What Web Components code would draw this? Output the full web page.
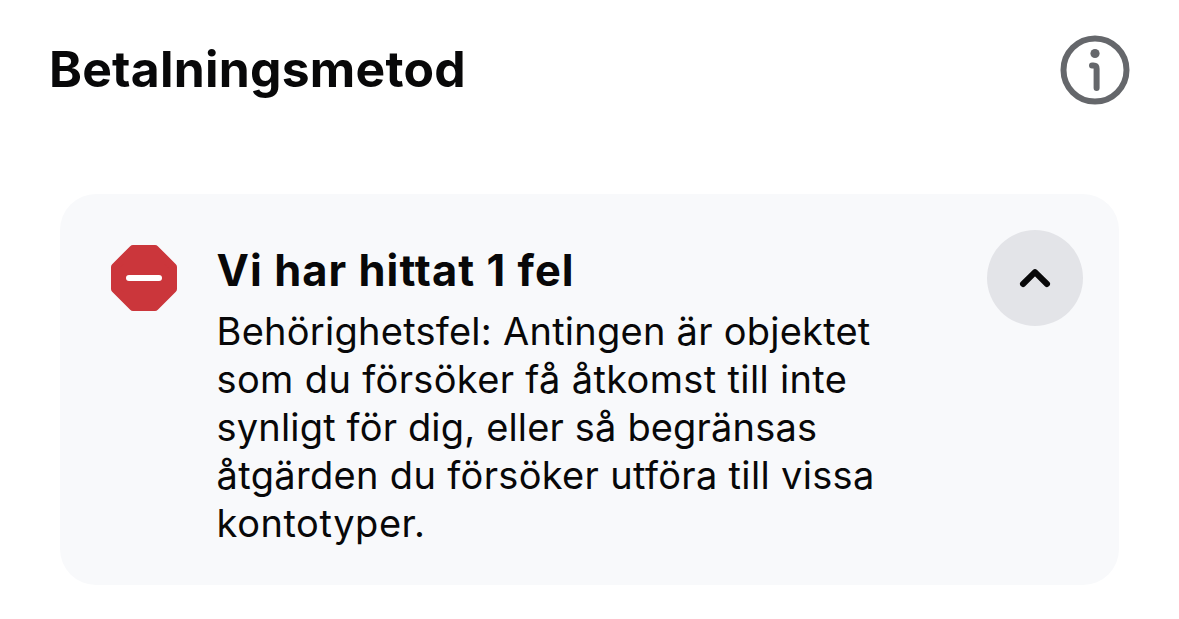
<!DOCTYPE html>
<html lang="sv">
<head>
<meta charset="utf-8">
<title>Betalningsmetod</title>
<style>
    body {
        margin: 0;
        background: #fff;
        color: #080809;
        font-family: Inter, "Liberation Sans", sans-serif;
    }
</style>
</head>
<body>
<payment-section heading="Betalningsmetod">
    <error-notice>
        <span slot="title">Vi har hittat 1 fel</span>
        <span slot="line" style="letter-spacing: 0.25px">Behörighetsfel: Antingen är objektet</span>
        <span slot="line" style="letter-spacing: 0.34px">som du försöker få åtkomst till inte</span>
        <span slot="line" style="letter-spacing: 0.16px">synligt för dig, eller så begränsas</span>
        <span slot="line" style="letter-spacing: 0.33px">åtgärden du försöker utföra till vissa</span>
        <span slot="line" style="letter-spacing: 0.55px">kontotyper.</span>
    </error-notice>
</payment-section>
<script>
class InfoIcon extends HTMLElement {
    constructor() {
        super();
        this.attachShadow({ mode: "open" });
        this.shadowRoot.innerHTML = `
        <style>
            :host { display: block; width: 70px; height: 70px; }
            svg { display: block; }
        </style>
        <svg width="70" height="70" viewBox="0 0 70 70" fill="none">
            <circle cx="35" cy="35" r="31.5" stroke="#65676b" stroke-width="6"/>
            <circle cx="35" cy="18.5" r="4.6" fill="#65676b"/>
            <path d="M32 30.5H33.5Q36.6 30.5 36.6 33.7V53" stroke="#65676b" stroke-width="6" stroke-linecap="round" stroke-linejoin="round"/>
        </svg>
        `;
    }
}

class StopIcon extends HTMLElement {
    constructor() {
        super();
        this.attachShadow({ mode: "open" });
        this.shadowRoot.innerHTML = `
        <style>
            :host { display: block; width: 66px; height: 66px; }
            svg { display: block; }
        </style>
        <svg width="66" height="66" viewBox="0 0 66 66">
            <path d="M22 4H44L62 22V44L44 62H22L4 44V22Z" fill="#cb363b" stroke="#cb363b" stroke-width="8" stroke-linejoin="round"/>
            <path d="M18 33H48" stroke="#fff" stroke-width="6" stroke-linecap="round"/>
        </svg>
        `;
    }
}

class CollapseButton extends HTMLElement {
    constructor() {
        super();
        this.attachShadow({ mode: "open" });
        this.shadowRoot.innerHTML = `
        <style>
            :host { display: block; width: 96px; height: 96px; }
            button {
                display: flex;
                align-items: center;
                justify-content: center;
                width: 96px;
                height: 96px;
                padding: 0;
                border: none;
                border-radius: 50%;
                background: #e3e4e8;
                cursor: pointer;
            }
        </style>
        <button type="button" aria-label="Dölj">
            <svg width="36" height="24" viewBox="0 0 36 24" fill="none">
                <path d="M6 18L18 6.2L30 18" stroke="#080809" stroke-width="6" stroke-linecap="round" stroke-linejoin="round"/>
            </svg>
        </button>
        `;
    }
}

class ErrorNotice extends HTMLElement {
    constructor() {
        super();
        this.attachShadow({ mode: "open" });
        this.shadowRoot.innerHTML = `
        <style>
            :host {
                display: flex;
                box-sizing: border-box;
                width: 1059px;
                height: 391px;
                padding: 36px 36px 0 51px;
                border-radius: 36px;
                background: #f8f9fb;
            }
            stop-icon { margin-top: 15px; }
            .text { flex: 1; margin-left: 39.6px; padding-top: 15px; }
            .title {
                font-size: 43.4px;
                font-weight: 700;
                line-height: 50px;
                letter-spacing: 1.05px;
                white-space: nowrap;
            }
            .lines { margin-top: 12px; }
            ::slotted([slot="line"]) {
                display: block;
                font-size: 38px;
                line-height: 48px;
                white-space: nowrap;
            }
        </style>
        <stop-icon></stop-icon>
        <div class="text">
            <div class="title"><slot name="title"></slot></div>
            <div class="lines"><slot name="line"></slot></div>
        </div>
        <collapse-button></collapse-button>
        `;
    }
}

class PaymentSection extends HTMLElement {
    constructor() {
        super();
        this.attachShadow({ mode: "open" });
        this.shadowRoot.innerHTML = `
        <style>
            :host { display: block; height: 619px; overflow: hidden; }
            header {
                display: flex;
                justify-content: space-between;
                align-items: flex-start;
                height: 70px;
                padding: 35px 49px 0 49px;
            }
            h1 {
                margin: 4px 0 0;
                font-size: 49.8px;
                font-weight: 700;
                line-height: 60px;
                letter-spacing: 0.25px;
            }
            .content { padding: 89px 60px 0; }
        </style>
        <header>
            <h1></h1>
            <info-icon></info-icon>
        </header>
        <div class="content"><slot></slot></div>
        `;
    }

    connectedCallback() {
        this.shadowRoot.querySelector("h1").textContent = this.getAttribute("heading") || "";
    }
}

customElements.define("info-icon", InfoIcon);
customElements.define("stop-icon", StopIcon);
customElements.define("collapse-button", CollapseButton);
customElements.define("error-notice", ErrorNotice);
customElements.define("payment-section", PaymentSection);
</script>
</body>
</html>
